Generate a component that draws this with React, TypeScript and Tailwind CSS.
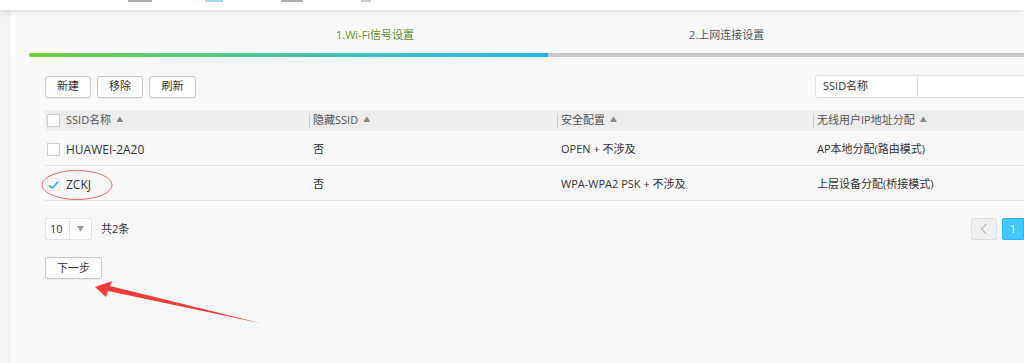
import React from "react";

const cols = [
  { title: "SSID名称", w: "w-[264px]" },
  { title: "隐藏SSID", w: "w-[248px]" },
  { title: "安全配置", w: "w-[256px]" },
  { title: "无线用户IP地址分配", w: "flex-1" },
];

const rows = [
  { ssid: "HUAWEI-2A20", hidden: "否", sec: "OPEN + 不涉及", ip: "AP本地分配(路由模式)", checked: false },
  { ssid: "ZCKJ", hidden: "否", sec: "WPA-WPA2 PSK + 不涉及", ip: "上层设备分配(桥接模式)", checked: true },
];

// bits of the nav that peek in under the top edge
const navBits = [
  { ml: "ml-[128px]", w: "w-[24px]", c: "bg-[#777]" },
  { ml: "ml-[53px]", w: "w-[18px]", c: "bg-[#6cc0ee]" },
  { ml: "ml-[58px]", w: "w-[22px]", c: "bg-[#777]" },
  { ml: "ml-[58px]", w: "w-[10px]", c: "bg-[#aaa]" },
];

function Caret() {
  return <span className="ml-[5px] inline-block text-[7px] text-[#888] align-middle">▲</span>;
}

function Checkbox({ checked }: { checked: boolean }) {
  if (checked) {
    return (
      <span className="flex h-[13px] w-[13px] items-center justify-center border border-[#eaeaea]">
        <svg width="12" height="10" viewBox="0 0 12 10">
          <path d="M1 5.5 L4.5 8.5 L11 1.5" fill="none" stroke="#2ea8f0" strokeWidth="1.8" />
        </svg>
      </span>
    );
  }
  return <span className="block h-[13px] w-[13px] border border-[#cfcfcf] bg-white" />;
}

function Btn({ label, w }: { label: string; w: string }) {
  return (
    <button className={`h-[22px] ${w} rounded-[3px] border border-[#c9c9c9] bg-white text-[11px] text-[#333] shadow-[0_1px_1px_rgba(0,0,0,0.06)]`}>
      {label}
    </button>
  );
}

export default function App() {
  return (
    <div
      className="relative flex h-[363px] w-[1024px] flex-col overflow-hidden bg-[#f8f8f8] text-[#333]"
      style={{ fontFamily: '"Open Sans", "Noto Sans CJK SC", sans-serif' }}
    >
      {/* top nav, mostly scrolled away */}
      <div className="relative z-10 flex h-[10px] shrink-0 items-start bg-white shadow-[0_2px_6px_rgba(0,0,0,0.12)]">
        {navBits.map((b, i) => (
          <span key={i} className={`${b.ml} ${b.w} ${b.c} h-[2px] opacity-60`} />
        ))}
      </div>

      <div className="flex flex-1">
        {/* left strip */}
        <div className="w-[10px] shrink-0 border-r border-[#ececec] bg-[#f3f3f3]" />

        <div className="flex-1">
          {/* steps */}
          <div className="bg-[#fafafa] pt-[7px]">
            <div className="flex h-[36px] items-center text-[11px]">
              <span className="ml-[326px] text-[#5a9128]">1.Wi-Fi信号设置</span>
              <span className="ml-[275px] text-[#555]">2.上网连接设置</span>
            </div>
            <div className="ml-[19px] flex h-[4px]">
              <div className="w-[519px] rounded-l-full bg-gradient-to-r from-[#6bd034] to-[#2ab4ea]" />
              <div className="flex-1 bg-[#c8c8c8]" />
            </div>
          </div>

          <div className="pl-[35px] pt-[18px]">
            {/* toolbar */}
            <div className="flex items-center">
              <div className="flex gap-[6px]">
                <Btn label="新建" w="w-[46px]" />
                <Btn label="移除" w="w-[46px]" />
                <Btn label="刷新" w="w-[47px]" />
              </div>
              <div className="ml-auto flex h-[23px] rounded-l-[3px] border border-r-0 border-[#e2e2e2] bg-white text-[11px]">
                <span className="flex w-[102px] items-center border-r border-[#e2e2e2] pl-[7px]">SSID名称</span>
                <span className="w-[106px]" />
              </div>
            </div>

            {/* table */}
            <div className="mt-[12px]">
              <div className="flex h-[21px] items-center bg-[#ededed] text-[11px] text-[#555]">
                {cols.map((c, i) => (
                  <div key={c.title} className={`${c.w} flex items-center`}>
                    {i === 0 ? (
                      <span className="ml-[2px] mr-[6px]"><Checkbox checked={false} /></span>
                    ) : (
                      <span className="mr-[3px] h-[14px] w-px bg-[#cfcfcf]" />
                    )}
                    <span>{c.title}</span>
                    <Caret />
                  </div>
                ))}
              </div>
              {rows.map((r) => (
                <div key={r.ssid} className="flex h-[35px] items-center border-b border-[#e4e4e4] pt-[3px] text-[11px]">
                  <div className="flex w-[264px] items-center">
                    <span className="ml-[2px] mr-[6px]"><Checkbox checked={r.checked} /></span>
                    <span className="text-[12px]">{r.ssid}</span>
                  </div>
                  <div className="w-[248px] pl-[4px]">{r.hidden}</div>
                  <div className="w-[256px] pl-[4px]">{r.sec}</div>
                  <div className="flex-1 pl-[4px]">{r.ip}</div>
                </div>
              ))}
            </div>

            {/* pagination */}
            <div className="mt-[17px] flex h-[22px] items-center">
              <div className="flex h-[22px] w-[47px] items-center rounded-[2px] border border-[#e3e3e3] bg-white text-[11px]">
                <span className="w-[24px] border-r border-[#e3e3e3] pl-[4px] leading-[20px]">10</span>
                <span className="flex-1 text-center text-[7px] text-[#999]">▼</span>
              </div>
              <span className="ml-[9px] text-[11px]">共2条</span>
              <div className="ml-auto flex gap-[5px]">
                <span className="flex h-[22px] w-[26px] items-center justify-center rounded-[2px] border border-[#dedede] bg-[#efefef]">
                  <svg width="8" height="12" viewBox="0 0 8 12">
                    <path d="M6.5 1 L1.5 6 L6.5 11" fill="none" stroke="#bbb" strokeWidth="1.2" />
                  </svg>
                </span>
                <span className="flex h-[22px] w-[22px] items-center justify-center rounded-l-[2px] border border-[#2bb6f0] bg-[#44c7ff] text-[11px] text-white">
                  1
                </span>
              </div>
            </div>

            <div className="mt-[14px]">
              <Btn label="下一步" w="w-[57px]" />
            </div>
          </div>
        </div>
      </div>

      {/* annotations */}
      <svg className="pointer-events-none absolute left-0 top-0" width="1024" height="363">
        <ellipse cx="77" cy="185" rx="35" ry="14.5" fill="none" stroke="#e86a6a" strokeWidth="1" />
        <polygon points="95,287 112,281 110,286 260,323 108,291 106,297" fill="#f23b3b" />
      </svg>
    </div>
  );
}
